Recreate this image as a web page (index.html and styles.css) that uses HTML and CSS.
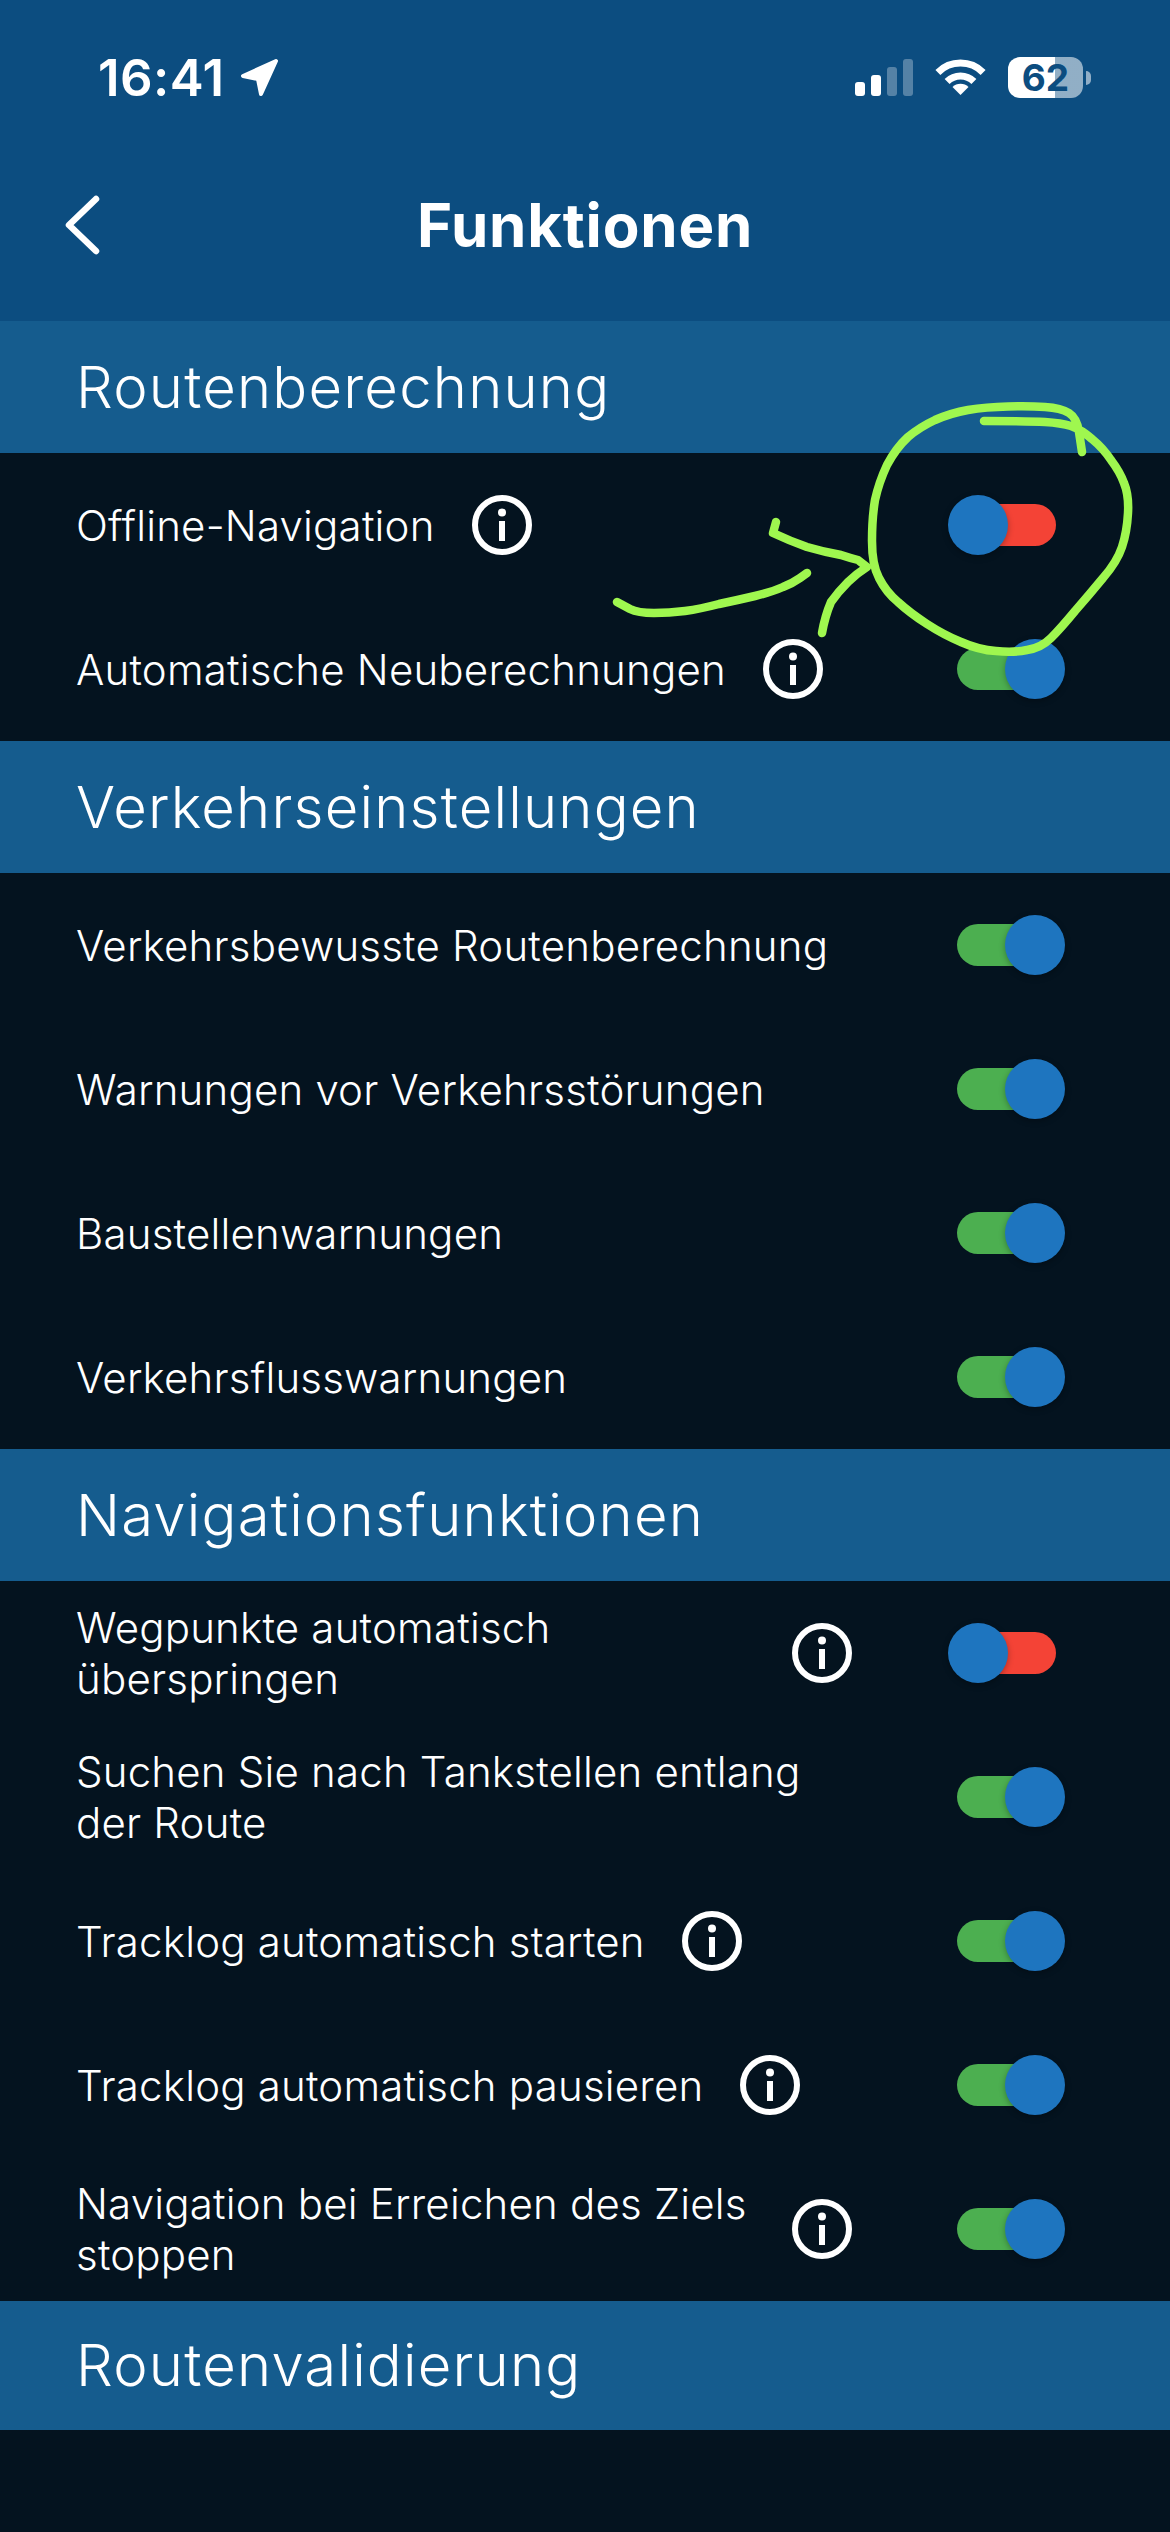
FILE: index.html
```html
<!DOCTYPE html>
<html lang="de">
<head>
    <meta charset="UTF-8">
    <meta name="viewport" content="width=device-width, initial-scale=1.0">
    <title>Funktionen</title>
    <link rel="stylesheet" href="styles.css">
</head>
<body>
    <svg width="0" height="0" class="defs">
        <symbol id="info" viewBox="0 0 60 60">
            <circle cx="30" cy="30" r="27" fill="none" stroke="#fff" stroke-width="6"/>
            <circle cx="30" cy="17.5" r="4" fill="#fff"/>
            <rect x="27" y="26" width="6" height="20" fill="#fff"/>
        </symbol>
    </svg>

    <div class="page">
        <!-- Top bar -->
        <header class="top">
            <div class="status">
                <div class="status-left">
                    <span class="time">16:41</span>
                    <svg class="loc" width="39" height="39" viewBox="0 0 39 39">
                        <path d="M36 3 L3 18 L18 21 L21 36 Z" fill="#fff" stroke="#fff" stroke-width="4" stroke-linejoin="round"/>
                    </svg>
                </div>
                <div class="status-right">
                    <div class="signal">
                        <i class="bar b1"></i>
                        <i class="bar b2"></i>
                        <i class="bar b3 dim"></i>
                        <i class="bar b4 dim"></i>
                    </div>
                    <svg class="wifi" width="51" height="37" viewBox="0 0 51 37">
                        <path d="M2.9 13.4 A32 32 0 0 1 48.1 13.4" fill="none" stroke="#fff" stroke-width="7"/>
                        <path d="M12.1 22.6 A19 19 0 0 1 38.9 22.6" fill="none" stroke="#fff" stroke-width="7"/>
                        <path d="M25.5 36 L17.5 28 A11.3 11.3 0 0 1 33.5 28 Z" fill="#fff"/>
                    </svg>
                    <div class="battery">62</div>
                    <i class="battery-tip"></i>
                </div>
            </div>
            <div class="nav">
                <svg class="back" width="36" height="60" viewBox="0 0 36 60">
                    <path d="M32 4 L5 30 L32 56" fill="none" stroke="#fff" stroke-width="6.5" stroke-linecap="round" stroke-linejoin="round"/>
                </svg>
                <h1>Funktionen</h1>
            </div>
        </header>

        <h2 class="section">Routenberechnung</h2>
        <div class="row">
            <div class="row-main"><span class="label">Offline-Navigation</span><svg class="info"><use href="#info"/></svg></div>
            <div class="toggle off"><i class="track"></i><i class="thumb"></i></div>
        </div>
        <div class="row">
            <div class="row-main"><span class="label">Automatische Neuberechnungen</span><svg class="info"><use href="#info"/></svg></div>
            <div class="toggle"><i class="track"></i><i class="thumb"></i></div>
        </div>

        <h2 class="section">Verkehrseinstellungen</h2>
        <div class="row">
            <div class="row-main"><span class="label">Verkehrsbewusste Routenberechnung</span></div>
            <div class="toggle"><i class="track"></i><i class="thumb"></i></div>
        </div>
        <div class="row">
            <div class="row-main"><span class="label">Warnungen vor Verkehrsstörungen</span></div>
            <div class="toggle"><i class="track"></i><i class="thumb"></i></div>
        </div>
        <div class="row">
            <div class="row-main"><span class="label">Baustellenwarnungen</span></div>
            <div class="toggle"><i class="track"></i><i class="thumb"></i></div>
        </div>
        <div class="row">
            <div class="row-main"><span class="label">Verkehrsflusswarnungen</span></div>
            <div class="toggle"><i class="track"></i><i class="thumb"></i></div>
        </div>

        <h2 class="section">Navigationsfunktionen</h2>
        <div class="row">
            <div class="row-main"><span class="label">Wegpunkte automatisch überspringen</span><svg class="info"><use href="#info"/></svg></div>
            <div class="toggle off"><i class="track"></i><i class="thumb"></i></div>
        </div>
        <div class="row">
            <div class="row-main"><span class="label">Suchen Sie nach Tankstellen entlang der Route</span></div>
            <div class="toggle"><i class="track"></i><i class="thumb"></i></div>
        </div>
        <div class="row">
            <div class="row-main"><span class="label">Tracklog automatisch starten</span><svg class="info"><use href="#info"/></svg></div>
            <div class="toggle"><i class="track"></i><i class="thumb"></i></div>
        </div>
        <div class="row">
            <div class="row-main"><span class="label">Tracklog automatisch pausieren</span><svg class="info"><use href="#info"/></svg></div>
            <div class="toggle"><i class="track"></i><i class="thumb"></i></div>
        </div>
        <div class="row">
            <div class="row-main"><span class="label">Navigation bei Erreichen des Ziels stoppen</span><svg class="info"><use href="#info"/></svg></div>
            <div class="toggle"><i class="track"></i><i class="thumb"></i></div>
        </div>

        <h2 class="section last">Routenvalidierung</h2>

        <!-- Hand drawn marker on top of the screenshot -->
        <svg class="marker" width="1170" height="700" viewBox="0 0 1170 700">
            <g fill="none" stroke="#9ff74f" stroke-width="8.5" stroke-linecap="round" stroke-linejoin="round">
                <path d="M1082 452 L1079 432 Q1077 418 1069 413 Q1061 408 1045 407 Q1030 406 1008 406.5 Q986 407 968 410 Q951 413 935 420 Q920 427 908 437 Q896 448 887 465 Q879 482 875 500 Q872 518 872 541 Q872 565 879 578 Q886 592 898 602 Q910 613 927 624 Q944 635 961 642 Q979 650 996 651 Q1013 653 1027 650 Q1041 648 1051 638 Q1061 628 1075 611 Q1089 595 1103 578 Q1117 562 1122 547 Q1127 532 1128 513 Q1129 495 1124 483 Q1120 472 1111 460 Q1103 448 1092 439 Q1082 430 1071 426 Q1061 423 1045 422 Q1030 421 984 421"/>
                <path d="M617 602 L630 609 Q638 613 654 613 Q669 613 685 611 Q700 609 719 604 Q738 600 755 596 Q772 592 783 587 Q793 583 800 578 L807 573"/>
                <path d="M776 522 L773 533 Q790 541 807 547 Q824 552 841 555 Q850 558 858 560 L867 567 Q856 574 848 582 Q838 592 831 602 Q825 616 822 633"/>
            </g>
        </svg>
    </div>
</body>
</html>
```

FILE: styles.css
```css
* {
    box-sizing: border-box;
}

body {
    margin: 0;
    background-color: #04131f;
    color: #fff;
    font-family: Inter, "Noto Sans", sans-serif;
}

.defs {
    display: block;
    height: 0;
}

.page {
    position: relative;
    width: 1170px;
    height: 2532px;
    overflow: hidden;
}

/* Top bar */
.top {
    height: 321px;
    background-color: #0c4d80;
    padding-top: 57px;
}

.status {
    height: 41px;
    display: flex;
    justify-content: space-between;
    align-items: center;
    padding: 0 79px 0 98px;
}

.status-left {
    display: flex;
    align-items: center;
    gap: 16px;
}

.time {
    font-size: 51px;
    font-weight: 600;
    line-height: 41px;
    letter-spacing: 0.4px;
}

.status-right {
    display: flex;
    align-items: center;
}

.signal {
    display: flex;
    align-items: flex-end;
    gap: 6px;
    height: 37px;
    margin-right: 22px;
}

.bar {
    width: 10px;
    border-radius: 3px;
    background-color: #fff;
}

.bar.dim {
    background-color: rgba(255, 255, 255, 0.3);
}

.b1 { height: 14px; }
.b2 { height: 21px; }
.b3 { height: 29px; }
.b4 { height: 37px; }

.wifi {
    margin-right: 22px;
}

.battery {
    width: 75px;
    height: 41px;
    border-radius: 12px;
    background: linear-gradient(90deg, #fff 47px, rgba(255, 255, 255, 0.55) 47px);
    color: #0c4d80;
    font-size: 37px;
    font-weight: 700;
    line-height: 41px;
    text-align: center;
}

.battery-tip {
    width: 5px;
    height: 14px;
    margin-left: 3px;
    border-radius: 0 7px 7px 0;
    background-color: rgba(255, 255, 255, 0.55);
}

.nav {
    display: grid;
    grid-template-columns: 1fr auto 1fr;
    align-items: center;
    height: 60px;
    margin-top: 97px;
    padding-left: 64px;
}

.back {
    display: block;
}

.nav h1 {
    margin: 0 0 0 -64px;
    font-size: 60px;
    font-weight: 700;
    line-height: 60px;
    letter-spacing: 0.8px;
}

/* Section titles */
.section {
    margin: 0;
    height: 132px;
    padding-left: 76px;
    background-color: #155c8e;
    font-size: 58px;
    font-weight: 300;
    line-height: 132px;
    letter-spacing: 1.2px;
}

.section.last {
    height: 129px;
    line-height: 129px;
}

/* Setting rows */
.row {
    display: flex;
    align-items: center;
    height: 144px;
    padding: 0 105px 0 76px;
}

.row-main {
    display: flex;
    align-items: center;
    width: 776px;
}

.label {
    flex: 0 1 auto;
    font-size: 42px;
    font-weight: 300;
    line-height: 51px;
    letter-spacing: 0.2px;
}

.info {
    flex: none;
    width: 60px;
    height: 60px;
    margin-left: 37px;
}

/* Toggle */
.toggle {
    position: relative;
    flex: none;
    width: 117px;
    height: 60px;
    margin-left: auto;
}

.track {
    position: absolute;
    left: 9px;
    top: 9px;
    width: 99px;
    height: 42px;
    border-radius: 21px;
    background-color: #4caf50;
}

.thumb {
    position: absolute;
    top: 0;
    right: 0;
    width: 60px;
    height: 60px;
    border-radius: 50%;
    background-color: #1e75bf;
    box-shadow: 0 2px 6px rgba(0, 0, 0, 0.3);
}

.toggle.off .track {
    background-color: #f44336;
}

.toggle.off .thumb {
    left: 0;
    right: auto;
}

/* Marker drawing */
.marker {
    position: absolute;
    left: 0;
    top: 0;
}
```
